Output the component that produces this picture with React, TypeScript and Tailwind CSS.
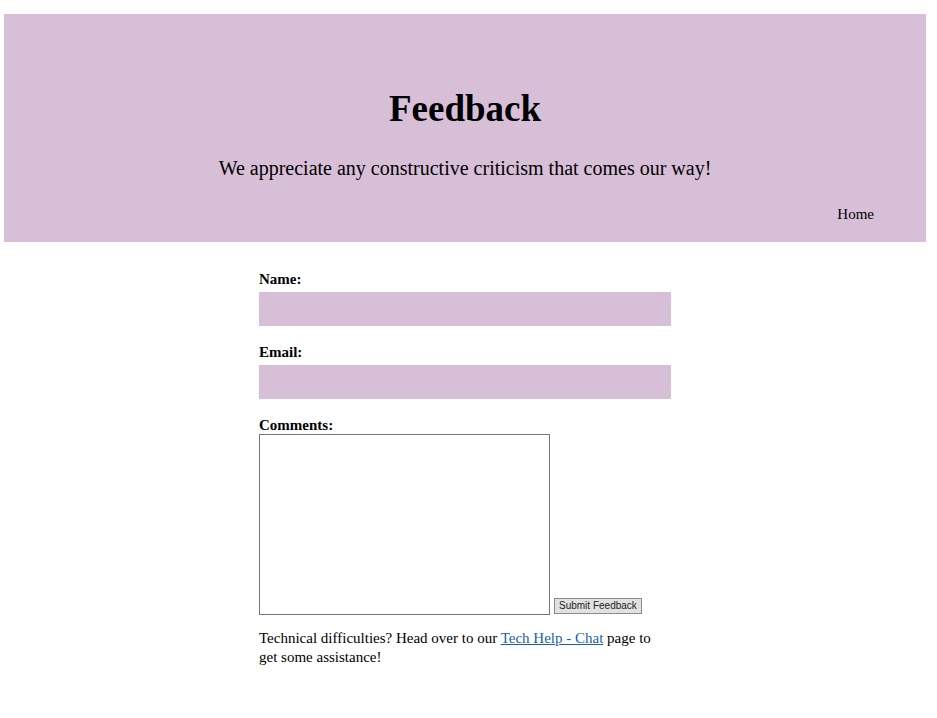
export default function App() {
  return (
    <div
      className="min-h-[718px] bg-white pt-[14px] text-black"
      style={{ fontFamily: '"Palatino Linotype", Palatino, "Liberation Serif", serif' }}
    >
      <header className="ml-[4px] mr-[11px] flex h-[228px] flex-col items-center bg-[#d8bfd8]">
        <h1 className="mt-[73px] text-[37px] font-bold leading-[44px]">Feedback</h1>
        <p className="mt-[25px] text-[20px] leading-[24px]">
          We appreciate any constructive criticism that comes our way!
        </p>
        <nav className="mt-[25px] flex w-full justify-end pr-[52px]">
          <a href="#" className="text-[15px] leading-[18px]">Home</a>
        </nav>
      </header>

      <main className="ml-[4px] mr-[11px] flex justify-center">
        <form className="mt-[28px] flex w-[412px] flex-col" onSubmit={(e) => e.preventDefault()}>
          <label className="text-[15px] font-bold leading-[18px]">Name:</label>
          <input className="mt-[4px] h-[34px] w-full bg-[#d8bfd8] outline-none" />

          <label className="mt-[17px] text-[15px] font-bold leading-[18px]">Email:</label>
          <input className="mt-[4px] h-[34px] w-full bg-[#d8bfd8] outline-none" />

          <label className="mt-[17px] text-[15px] font-bold leading-[18px]">Comments:</label>
          <div className="flex items-end gap-[4px]">
            <textarea className="h-[181px] w-[291px] resize-none border border-[#767676] bg-white outline-none" />
            <button
              type="submit"
              className="mb-[1px] h-[16px] border border-[#8a8a8a] bg-[#e1e1e1] px-[4px] text-[10px] leading-[14px] text-[#222]"
              style={{ fontFamily: '"Liberation Sans", Arial, sans-serif' }}
            >
              Submit Feedback
            </button>
          </div>

          <p className="mt-[14px] text-[15px] leading-[19px]">
            Technical difficulties? Head over to our{" "}
            <a href="#" className="text-[#1a5fa8] underline">Tech Help - Chat</a> page to get some
            assistance!
          </p>
        </form>
      </main>
    </div>
  );
}
